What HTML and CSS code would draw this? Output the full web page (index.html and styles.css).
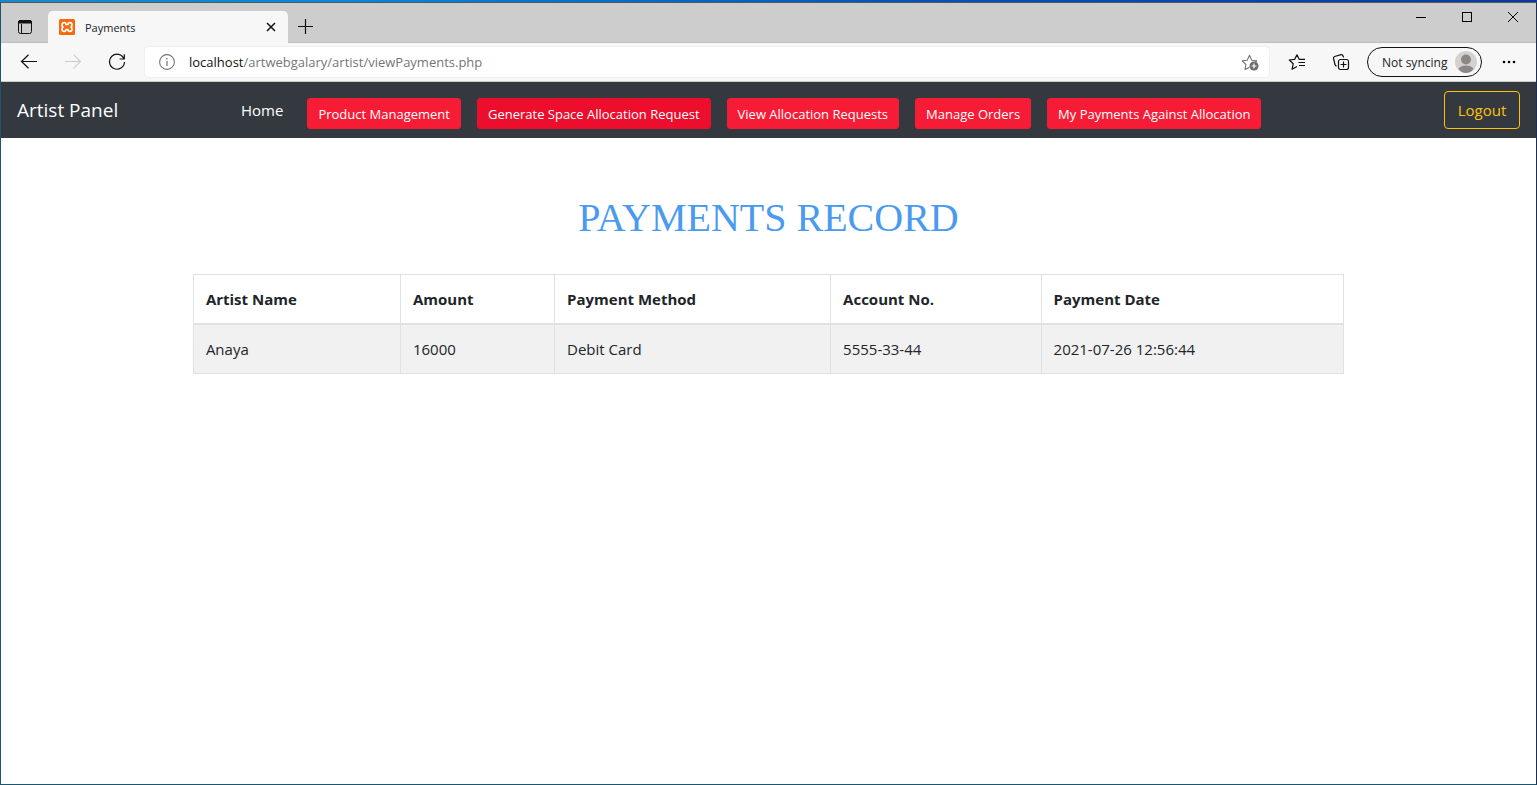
FILE: index.html
```html
<!DOCTYPE html>
<html lang="en">
<head>
<meta charset="utf-8">
<title>Payments</title>
<link rel="stylesheet" href="styles.css">
</head>
<body>
<div class="desktop">
  <div class="window">
    <div class="tabstrip">
      <button class="icon-btn tab-actions" type="button" aria-label="Tab actions">
        <svg width="16" height="16" viewBox="0 0 16 16"><rect x="1.5" y="1.5" width="13" height="13" rx="2" fill="none" stroke="#111"/><path d="M1.5 4V3q0-1.500 1.500-1.500h10q1.500 0 1.500 1.500v1z" fill="#111" stroke="#111"/><path d="M4.500 5v9.500" stroke="#111"/></svg>
      </button>
      <div class="tab">
        <svg class="favicon" width="16" height="16" viewBox="0 0 16 16"><rect width="16" height="16" rx="1.500" fill="#f7690c"/><path d="M5.500 3.700Q3 3.500 3 6q0 1.300 1 2q-1 .7-1 2q0 2.500 2.500 2.300Q7 12.200 7 10.500h2q0 1.700 1.500 1.800Q13 12.500 13 10q0-1.300-1-2q1-.7 1-2q0-2.500-2.500-2.300Q9 3.800 9 5.500H7Q7 3.800 5.500 3.700z" fill="none" stroke="#fff" stroke-width="1.700" stroke-linejoin="round"/></svg>
        <span class="tab-title">Payments</span>
        <button class="icon-btn tab-close" type="button" aria-label="Close tab">
          <svg width="10" height="10" viewBox="0 0 10 10"><path d="M1 1l8 8M9 1L1 9" stroke="#111" stroke-width="1.500"/></svg>
        </button>
      </div>
      <button class="icon-btn new-tab" type="button" aria-label="New tab">
        <svg width="16" height="16" viewBox="0 0 16 16"><path d="M1 8.500h15M8.500 1v15" stroke="#111" stroke-width="1.200"/></svg>
      </button>
      <div class="window-controls">
        <button class="icon-btn control" type="button" aria-label="Minimize"><svg width="12" height="12" viewBox="0 0 12 12"><path d="M1 6.500h10" stroke="#000"/></svg></button>
        <button class="icon-btn control" type="button" aria-label="Maximize"><svg width="12" height="12" viewBox="0 0 12 12"><rect x="1.500" y="1.500" width="9" height="9" fill="none" stroke="#000"/></svg></button>
        <button class="icon-btn control" type="button" aria-label="Close"><svg width="12" height="12" viewBox="0 0 12 12"><path d="M1 1l10 10M11 1L1 11" stroke="#000"/></svg></button>
      </div>
    </div>

    <div class="toolbar">
      <div class="history">
        <button class="icon-btn history-btn" type="button" aria-label="Back"><svg width="18" height="16" viewBox="0 0 18 16"><path d="M17 7.500H1.500M8.500 .7L1.500 7.500l7 6.800" fill="none" stroke="#111" stroke-width="1.200"/></svg></button>
        <button class="icon-btn history-btn" type="button" aria-label="Forward" disabled><svg width="18" height="16" viewBox="0 0 18 16"><path d="M1 7.500h15.500M9.500 .7l7 6.800l-7 6.800" fill="none" stroke="#ccc" stroke-width="1.100"/></svg></button>
        <button class="icon-btn history-btn" type="button" aria-label="Refresh"><svg width="18" height="18" viewBox="0 0 18 18"><path d="M16 6A7.500 7.500 0 1 0 16.500 9M16.300 1.300v4.700h-4.700" fill="none" stroke="#111" stroke-width="1.200"/></svg></button>
      </div>
      <div class="address">
        <svg width="16" height="16" viewBox="0 0 16 16"><circle cx="8" cy="8" r="7.400" fill="none" stroke="#767676" stroke-width="1.100"/><path d="M8 7v5M8 4v1.500" stroke="#767676" stroke-width="1.200"/></svg>
        <a class="url" href="#"><span class="host">localhost</span>/artwebgalary/artist/viewPayments.php</a>
        <button class="icon-btn" type="button" aria-label="Add to favorites"><svg width="18" height="18" viewBox="0 0 18 18"><path d="M8.500 14.200L4 16.600l.9-5.100L1.200 7.900l5-.7L8.500 2.300l2.300 4.900l5 .7l-2 2" fill="none" stroke="#767676" stroke-width="1.100" stroke-linejoin="round"/><circle cx="13" cy="13" r="4.500" fill="#6b6b6b"/><path d="M10.500 13h5M13 10.500v5" stroke="#fff" stroke-width="1.200"/></svg></button>
      </div>
      <div class="tools">
        <button class="icon-btn tool" type="button" aria-label="Favorites"><svg width="18" height="18" viewBox="0 0 18 18"><path d="M9 13.400L4 16.300l1.200-5.500L1.300 7l5.300-.6L9 1.800l2.300 4.600H17M10.500 9.500H17M11 12.500h6" fill="none" stroke="#111" stroke-width="1.200" stroke-linejoin="round"/></svg></button>
        <button class="icon-btn tool" type="button" aria-label="Collections"><svg width="18" height="18" viewBox="0 0 18 18"><rect x="6.500" y="6.500" width="10" height="10" rx="2" fill="none" stroke="#111" stroke-width="1.200"/><path d="M11.500 8.500v6M8.500 11.500h6M4.600 13.300Q3.300 12.800 3 11.500L1.500 5.500Q1.200 4 2.700 3.500L9 1.600q1.500-.3 2 1.100l.6 1.800" fill="none" stroke="#111" stroke-width="1.200"/></svg></button>
        <button class="profile" type="button">Not syncing
          <svg width="22" height="22" viewBox="0 0 22 22"><circle cx="11" cy="11" r="11" fill="#d5d1cf"/><circle cx="11" cy="8.500" r="5" fill="#8b8785"/><path d="M3.500 18Q5 14.500 11 14.500T18.500 18Q15.500 22 11 22T3.500 18z" fill="#8b8785"/></svg>
        </button>
        <button class="icon-btn more" type="button" aria-label="Settings and more"><svg width="14" height="4" viewBox="0 0 14 4"><circle cx="2" cy="2" r="1.300"/><circle cx="7" cy="2" r="1.300"/><circle cx="12" cy="2" r="1.300"/></svg></button>
      </div>
    </div>

    <nav class="navbar">
      <a class="brand" href="#">Artist Panel</a>
      <div class="nav-items">
        <a class="nav-link" href="#">Home</a>
        <button class="nav-btn" type="button">Product Management</button>
        <button class="nav-btn nav-btn-active" type="button">Generate Space Allocation Request</button>
        <button class="nav-btn" type="button">View Allocation Requests</button>
        <button class="nav-btn" type="button">Manage Orders</button>
        <button class="nav-btn" type="button">My Payments Against Allocation</button>
      </div>
      <button class="logout" type="button">Logout</button>
    </nav>

    <main class="content">
      <h1 class="title">PAYMENTS RECORD</h1>
      <table class="records">
        <colgroup><col class="col-name"><col class="col-amount"><col class="col-method"><col class="col-account"><col class="col-date"></colgroup>
        <thead>
          <tr><th>Artist Name</th><th>Amount</th><th>Payment Method</th><th>Account No.</th><th>Payment Date</th></tr>
        </thead>
        <tbody>
          <tr><td>Anaya</td><td>16000</td><td>Debit Card</td><td>5555-33-44</td><td>2021-07-26 12:56:44</td></tr>
        </tbody>
      </table>
    </main>
  </div>
</div>
</body>
</html>
```
FILE: styles.css
```css
* { box-sizing: border-box; }

body {
  margin: 0;
  font-family: "Open Sans", "Noto Sans", sans-serif;
  color: #212529;
}

button { font-family: inherit; cursor: pointer; }
svg { display: block; flex: none; }

.desktop {
  display: flex;
  min-height: 100vh;
  padding-top: 2px;
  background: linear-gradient(90deg, #1889c8 0, #0a8ad8 20%, #0653b4 60%, #0a3a9c 100%);
}

.window {
  flex: 1;
  display: flex;
  flex-direction: column;
  border: 1px solid #1b5570;
  border-top-color: #4f5a60;
  border-right-color: #1b2c55;
  background: #fff;
}

.icon-btn {
  display: flex;
  align-items: center;
  justify-content: center;
  padding: 0;
  border: 0;
  background: none;
}

/* Tab strip */
.tabstrip {
  display: flex;
  height: 40px;
  background: #cdcdcd;
  border-bottom: 1px solid #bdbdbd;
}

.tab-actions { width: 47px; padding-top: 8px; }

.tab {
  display: flex;
  align-items: center;
  gap: 10px;
  width: 240px;
  height: 32px;
  margin-top: 8px;
  padding: 0 11px;
  border-radius: 5px 5px 0 0;
  background: #f7f7f7;
}

.tab-title { flex: 1; font-size: 11px; }
.tab-close { width: 12px; height: 16px; }
.new-tab { width: 34px; padding-top: 7px; }

.window-controls { display: flex; height: 28px; margin-left: auto; }
.control { width: 46px; }

/* Address bar row */
.toolbar {
  display: flex;
  align-items: center;
  height: 39px;
  background: #f7f7f7;
  border-bottom: 1px solid #ccc;
}

.history { display: flex; padding-left: 6px; }
.history-btn { width: 44px; height: 32px; }

.address {
  flex: 1;
  display: flex;
  align-items: center;
  gap: 14px;
  height: 30px;
  margin-left: 6px;
  padding: 0 10px 0 14px;
  border-radius: 4px;
  background: #fff;
  box-shadow: 0 0 2px #ddd;
}

.url { flex: 1; font-size: 13px; color: #767676; text-decoration: none; }
.host { color: #111; }

.tools { display: flex; align-items: center; padding-left: 6px; }
.tool { width: 44px; height: 32px; }

.profile {
  display: flex;
  align-items: center;
  justify-content: space-between;
  width: 115px;
  height: 30px;
  margin-left: 4px;
  padding: 0 4px 0 14px;
  border: 1px solid #111;
  border-radius: 15px;
  background: #f7f7f7;
  font-size: 12px;
  color: #222;
}

.more { width: 54px; height: 32px; }

/* Site navigation */
.navbar {
  display: flex;
  align-items: center;
  min-height: 56px;
  padding: 8px 16px;
  background: #33393f;
}

.brand {
  width: 216px;
  font-size: 19px;
  color: #fff;
  text-decoration: none;
}

.nav-items { display: flex; align-items: center; gap: 16px; }

.nav-link {
  padding: 0 8px;
  font-size: 15px;
  color: #fff;
  text-decoration: none;
}

.nav-btn {
  height: 31px;
  margin-top: 7px;
  padding: 0 10px;
  border: 1px solid #f61c36;
  border-radius: 3px;
  background: #f61c36;
  font-size: 13px;
  color: #fff;
  white-space: nowrap;
}

.nav-btn-active { background: #ec0e2c; border-color: #ec0e2c; }

.logout {
  height: 38px;
  width: 76px;
  margin-left: auto;
  padding: 0;
  border: 1px solid #ffc107;
  border-radius: 4px;
  background: transparent;
  font-size: 15px;
  color: #ffc107;
}

/* Payments page */
.content { width: 75%; margin: 0 auto; padding-top: 56px; }

.title {
  margin: 0 0 32px;
  font-family: "Liberation Serif", serif;
  font-size: 40px;
  font-weight: 400;
  line-height: 48px;
  text-align: center;
  color: #4a9af0;
}

.records {
  width: 100%;
  table-layout: fixed;
  border-collapse: collapse;
  border: 1px solid #dee2e6;
  font-size: 15px;
  line-height: 24px;
  text-align: left;
}

.records th,
.records td { padding: 12px; border: 1px solid #dee2e6; }
.records th { border-bottom-width: 2px; font-weight: 700; }
.records td { background: #f1f1f1; }

.col-name { width: 18%; }
.col-amount { width: 13.4%; }
.col-method { width: 24%; }
.col-account { width: 18.3%; }
.col-date { width: 26.3%; }
```
